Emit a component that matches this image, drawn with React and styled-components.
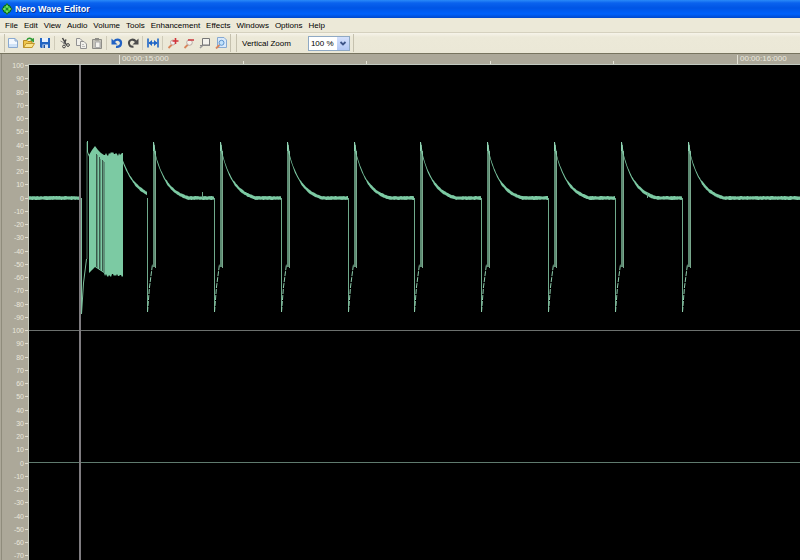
import React, { useState } from 'react'
import styled, { createGlobalStyle } from 'styled-components'

const GlobalStyle = createGlobalStyle`
  * { box-sizing: border-box; }
  body {
    margin: 0;
    background: #000;
    font-family: "Liberation Sans", Arial, sans-serif;
    font-size: 8px;
    color: #000;
  }
  button, select { font: inherit; color: inherit; }
`

const Window = styled.div`
  display: flex;
  flex-direction: column;
  height: 100vh;
  overflow: hidden;
`

const TitleBar = styled.header`
  flex: none;
  display: flex;
  align-items: center;
  gap: 2px;
  height: 18px;
  padding: 0 1px;
  background: linear-gradient(#2a8af8 0, #0a62ee 3px, #0055e5 8px, #0061fb 14px, #0048cc 18px);
`

const Title = styled.h1`
  margin: 0;
  font-size: 9px;
  line-height: 18px;
  color: #fff;
  text-shadow: 1px 1px 0 #0a2f8c;
`

const MenuBar = styled.nav`
  flex: none;
  display: flex;
  gap: 6px;
  height: 15px;
  padding: 0 5px;
  background: #ece9d8;
  border-bottom: 1px solid #d5d1bf;
`

const MenuItem = styled.button`
  padding: 0;
  border: 0;
  background: none;
  line-height: 13px;
`

const ToolBar = styled.div`
  flex: none;
  display: flex;
  align-items: center;
  height: 20px;
  padding-left: 4px;
  background: linear-gradient(#f6f4ea, #ece9d8 4px, #ebe8d7);
`

const ToolGroup = styled.div`
  display: flex;
  align-items: center;
  height: 18px;
  gap: 4px;
  padding: 0 3px 0 2px;
  border-left: 1px solid #c5c1ae;
  border-right: 1px solid #c5c1ae;
  margin-right: 5px;
`

const ToolButton = styled.button`
  display: block;
  width: 12px;
  height: 12px;
  padding: 0;
  border: 0;
  background: none;

  svg { display: block; }
`

const Separator = styled.span`
  width: 1px;
  height: 14px;
  margin-left: -1px;
  background: #cfcbb9;
`

const ZoomLabel = styled.label`
  margin: 0 13px 0 3px;
`

const SelectBox = styled.span`
  display: grid;
  grid-template-columns: 1fr 12px;
  width: 42px;
  height: 15px;
  border: 1px solid #8fa9c4;
  background: #fff;

  select {
    grid-area: 1 / 1 / 2 / 3;
    appearance: none;
    border: 0;
    padding: 0 0 0 2px;
    background: none;
    outline: 0;
  }
  svg {
    grid-area: 1 / 2;
    width: 12px;
    height: 13px;
    background: linear-gradient(#d5e1fc, #b3c8f5);
    pointer-events: none;
  }
`

const Editor = styled.main`
  flex: 1;
  min-height: 0;
  display: grid;
  grid-template-columns: 28px 1fr;
  border-top: 1px solid #77745f;
  background: #aca899;
  overflow: hidden;
`

const Scale = styled.div`
  padding-top: 5px;
  margin-left: 1px;
  border-left: 1px solid #8f8c7c;
`

const ScaleRows = styled.ol`
  display: grid;
  grid-template-rows: repeat(40, 1fr);
  height: 530px;
  margin: 0;
  padding: 0;
  list-style: none;
`

const ScaleRow = styled.li`
  display: flex;
  align-items: center;
  justify-content: flex-end;
  gap: 1px;
  font-size: 7px;
  color: #e9e7dc;

  &::after {
    content: '';
    width: 3px;
    height: 1px;
    background: #e0ded2;
  }
`

const Track = styled.section`
  display: flex;
  flex-direction: column;
  min-width: 0;
`

const Ruler = styled.div`
  flex: none;
  display: flex;
  height: 11px;
  padding-left: 91px;
  border-bottom: 1px solid #c3cbc2;
  overflow: hidden;
`

const RulerSpan = styled.div`
  flex: none;
  display: grid;
  grid-template-columns: repeat(5, 1fr);
  align-items: end;
  width: 618px;
`

const RulerTick = styled.span`
  height: ${p => (p.$major ? '9px' : '3px')};
  padding-left: 2px;
  border-left: 1px solid #e4e2d6;
  line-height: 8px;
  color: #ebe9df;
`

const Waves = styled.div`
  position: relative;
  flex: 1;
  min-height: 0;
  background: #000;
  border-left: 1px solid #c9cdc0;
  overflow: hidden;
`

const Channel = styled.svg`
  display: block;
  width: 100%;
  height: 266px;
  border-bottom: 1px solid #6c706e;
`

const Cursor = styled.div`
  position: absolute;
  top: 0;
  bottom: 0;
  left: 50px;
  width: 2px;
  background: #7f7c80;
`

const MENUS = ['File', 'Edit', 'View', 'Audio', 'Volume', 'Tools', 'Enhancement', 'Effects', 'Windows', 'Options', 'Help']

const lens = <path d="M5 7.5L1.5 11" stroke="#d9855b" strokeWidth="1.8" />

const ICONS = {
  New: (
    <>
      <path d="M1.500 1.500H8L10.500 4V10.500H1.500Z" fill="#f3f8fe" stroke="#8aa9cf" />
      <path d="M8 1.500V4H10.500" fill="none" stroke="#8aa9cf" />
      <path d="M2 7H10V10H2Z" fill="#cfe2f7" />
    </>
  ),
  Open: (
    <>
      <path d="M.5 10.500V3.500H4L5 4.500H9V10.500Z" fill="#efc64c" stroke="#b98b22" />
      <path d="M.7 10.500L3 6.500H11.500L9 10.500Z" fill="#fbe48c" stroke="#c2962c" />
      <path d="M4 3C5 .8 8 .8 9 2.500" fill="none" stroke="#2f9a35" strokeWidth="1.500" />
      <path d="M7 3L11 1V5.500Z" fill="#2f9a35" />
    </>
  ),
  Save: (
    <>
      <path d="M1 1H11V11H2L1 10Z" fill="#2466c2" />
      <path d="M3 1H9V5H3Z" fill="#e8f1fc" />
      <path d="M3.500 7.500H9V11H3.500Z" fill="#dbe6f4" />
      <path d="M4.500 8H6V11H4.500Z" fill="#1c4f9c" />
    </>
  ),
  Cut: (
    <g fill="none" stroke="#444">
      <path d="M3.500 1L7.500 8M7 2.500L5 7" strokeWidth="1.500" />
      <path d="M1.500 4L6 6.500" stroke="#888" />
      <circle cx="5" cy="9.500" r="1.400" />
      <circle cx="9" cy="8" r="1.400" />
    </g>
  ),
  Copy: (
    <g fill="#f1f0ea" stroke="#929292">
      <path d="M1.500 1.500H5L7.500 4V8.500H1.500Z" />
      <path d="M5.500 4.500H9L11.500 7V11.500H5.500Z" />
      <path d="M7 7.500H9M7 9.500H10" stroke="#bbb" />
    </g>
  ),
  Paste: (
    <>
      <path d="M1.500 2.500H10.500V11.500H1.500Z" fill="#c5c3ba" stroke="#8d8c86" />
      <path d="M4 1H8V3.500H4Z" fill="#8d8c86" />
      <path d="M4.500 5H9V10.500H4.500Z" fill="#f4f3ee" stroke="#aaa" />
    </>
  ),
  Undo: (
    <>
      <path d="M3 4.500C6 1 10.500 3 10 6.500C9.700 9 7.500 10 5 9.800" fill="none" stroke="#2162c4" strokeWidth="2.200" />
      <path d="M.5 1.500V7.500H6.500Z" fill="#2162c4" />
    </>
  ),
  Redo: (
    <>
      <path d="M9 4.500C6 1 1.500 3 2 6.500C2.300 9 4.500 10 6.500 9.800" fill="none" stroke="#4c4c4c" strokeWidth="2" />
      <path d="M11.500 1.500V7.500H5.500Z" fill="#4c4c4c" />
    </>
  ),
  'Fit selection': (
    <>
      <path d="M1 1.500V10.500M11 1.500V10.500M2 6H10" fill="none" stroke="#1f66c8" strokeWidth="1.600" />
      <path d="M1.500 6L5 3V9ZM10.500 6L7 3V9Z" fill="#1f66c8" />
    </>
  ),
  'Zoom in': (
    <>
      {lens}
      <circle cx="6" cy="5.500" r="2.500" fill="#eee" stroke="#c9a79d" />
      <path d="M8.500 1V7M5.500 4H11.500" stroke="#d2343a" strokeWidth="1.600" />
    </>
  ),
  'Zoom out': (
    <>
      {lens}
      <circle cx="6.500" cy="5.500" r="2.800" fill="#f4f1ea" stroke="#b9aaa2" />
      <path d="M5 3H11" stroke="#cf4348" strokeWidth="1.600" />
    </>
  ),
  'Zoom to selection': (
    <>
      <path d="M4.500 7.500L1 11" stroke="#999" strokeWidth="1.600" />
      <path d="M3.500 1.500H10.500V8H3.500Z" fill="#f3f2ec" stroke="#777" />
      <path d="M1 8.500H11" stroke="#888" />
    </>
  ),
  'Zoom to file': (
    <>
      <path d="M2.500 .5H9L11.500 3V10.500H2.500Z" fill="#d9e9fa" stroke="#86a9d2" />
      <path d="M4.500 8L1 11.500" stroke="#d9855b" strokeWidth="1.800" />
      <circle cx="6.500" cy="5.800" r="2.500" fill="#c2e2fb" stroke="#5b94cf" />
    </>
  ),
}

const TOOLS = [
  ['New', 'Open', 'Save'],
  ['Cut', 'Copy', 'Paste'],
  ['Undo', 'Redo'],
  ['Fit selection'],
  ['Zoom in', 'Zoom out', 'Zoom to selection', 'Zoom to file'],
]

// 100 down to -90, the lower channel stops at -70
const LEVELS = Array.from({ length: 20 }, (_, i) => 100 - i * 10)
const SCALE = LEVELS.concat(LEVELS.slice(0, 18))

const noise = (i) => Math.abs(Math.sin(i * 12.9898) * 43758.5453) % 1

const ZERO = 133
const PULSES = Array.from({ length: 9 }, (_, i) => 118 + Math.round(i * 66.85))

// closed band that follows y = f(x), about three pixels thick
function band(from, to, f) {
  const top = []
  const bottom = []
  for (let x = from; x <= to; x++) {
    const [y, half] = f(x)
    top.push(`${x},${(y - half - noise(x) * 0.7).toFixed(1)}`)
    bottom.unshift(`${x},${(y + half + noise(x + 500) * 0.7).toFixed(1)}`)
  }
  return top.concat(bottom).join(' ')
}

function decay(start, height, tau) {
  return (x) => {
    const d = x - start
    const drop = height * Math.exp(-d / tau) - (d / 33) * 2.5
    return [ZERO - Math.max(0, drop), d < 14 ? 0.8 : 1.4]
  }
}

function Pulse({ x, end }) {
  return (
    <g>
      <path d={`M${x}.500 ${ZERO}V247`} stroke="#6fa98b" />
      <path d={`M${x}.500 247L${x + 2}.500 222L${x + 5}.500 199`} fill="none" stroke="#8fcfae" strokeDasharray="5 1" />
      <path d={`M${x + 7} 80V202`} stroke="#5d8a72" strokeWidth="2" />
      <path d={`M${x + 8}.500 86V203`} stroke="#78a78c" />
      <path d={`M${x + 6}.500 86V77L${x + 8}.500 90`} fill="none" stroke="#8fd3b2" />
      <polygon points={band(x + 7, end, decay(x + 6, 53, 12))} fill="#7ccaa3" />
    </g>
  )
}

function Burst() {
  const top = [[60, 90], [63, 85], [66, 81], [69, 85], [72, 88], [75, 90]]
  const low = [[75, 208], [72, 206], [69, 204], [66, 202], [63, 205], [60, 208]]
  const solidTop = []
  const solidLow = []
  for (let x = 76; x <= 94; x++) {
    solidTop.push([x, 91 - Math.round(noise(x) * 4)])
    solidLow.unshift([x, 209 + Math.round(noise(x + 40) * 3)])
  }
  return (
    <g>
      <path d={`M52.500 ${ZERO}V249L54.500 218L57.500 194`} fill="none" stroke="#7fbf9d" />
      <path d="M58 77V194" stroke="#4f7460" />
      <path d="M58.500 76V87L61 93" fill="none" stroke="#7ccaa3" />
      <polygon points={[...top, ...solidTop, ...solidLow, ...low].join(' ')} fill="#7ccaa3" />
      <path d="M67.500 89V202M70.500 92V204M73.500 95V206" stroke="#3a5a4b" />
      <path d="M68.500 90V203M71.500 94V205M74.500 96V207M75.500 97V208" stroke="#5f927a" />
      <polygon points={band(93, 118, decay(92, 42, 14))} fill="#7ccaa3" />
    </g>
  )
}

function Wave() {
  return (
    <>
      <polygon points={band(0, 52, () => [ZERO, 1.4])} fill="#7ccaa3" />
      <Burst />
      {PULSES.map((x, i) => <Pulse key={x} x={x} end={PULSES[i + 1] || 771} />)}
      <path d="M173.500 127V133M618.500 128V133" stroke="#6fa98b" />
    </>
  )
}

function App() {
  const [zoom, setZoom] = useState('100 %')

  return (
    <Window>
      <GlobalStyle />
      <TitleBar>
        <svg width="12" height="14" viewBox="0 0 12 14">
          <path d="M6 1L11.500 7L6 13L.5 7Z" fill="#138a2c" />
          <circle cx="6" cy="7" r="4" fill="#35c63a" stroke="#0b5c22" />
          <path d="M6 3V11M2 7H10" stroke="#b4f48c" />
          <circle cx="6" cy="7" r="1.500" fill="#188a2a" />
        </svg>
        <Title>Nero Wave Editor</Title>
      </TitleBar>

      <MenuBar>
        {MENUS.map(name => <MenuItem key={name}>{name}</MenuItem>)}
      </MenuBar>

      <ToolBar>
        <ToolGroup>
          {TOOLS.map((group, i) => (
            <React.Fragment key={i}>
              {i > 0 && <Separator />}
              {group.map(name => (
                <ToolButton key={name} aria-label={name}>
                  <svg width="12" height="12" viewBox="0 0 12 12">{ICONS[name]}</svg>
                </ToolButton>
              ))}
            </React.Fragment>
          ))}
        </ToolGroup>
        <ToolGroup>
          <ZoomLabel htmlFor="zoom">Vertical Zoom</ZoomLabel>
          <SelectBox>
            <select id="zoom" value={zoom} onChange={(e) => setZoom(e.target.value)}>
              <option>50 %</option>
              <option>100 %</option>
              <option>200 %</option>
            </select>
            <svg viewBox="0 0 12 13">
              <path d="M3.500 5L6 7.500L8.500 5" fill="none" stroke="#3d5488" strokeWidth="1.800" />
            </svg>
          </SelectBox>
        </ToolGroup>
      </ToolBar>

      <Editor>
        <Scale>
          <ScaleRows>
            {SCALE.map((level, i) => <ScaleRow key={i}>{level}</ScaleRow>)}
          </ScaleRows>
        </Scale>
        <Track>
          <Ruler>
            {['00:00:15:000', '00:00:16:000'].map(time => (
              <RulerSpan key={time}>
                <RulerTick $major>{time}</RulerTick>
                <RulerTick />
                <RulerTick />
                <RulerTick />
                <RulerTick />
              </RulerSpan>
            ))}
          </Ruler>
          <Waves>
            <Channel viewBox="0 0 771 265" preserveAspectRatio="none">
              <Wave />
            </Channel>
            <Channel viewBox="0 0 771 265" preserveAspectRatio="none">
              <path d="M0 131.500H771" stroke="#5f7a6e" />
            </Channel>
            <Cursor />
          </Waves>
        </Track>
      </Editor>
    </Window>
  )
}

export default App
